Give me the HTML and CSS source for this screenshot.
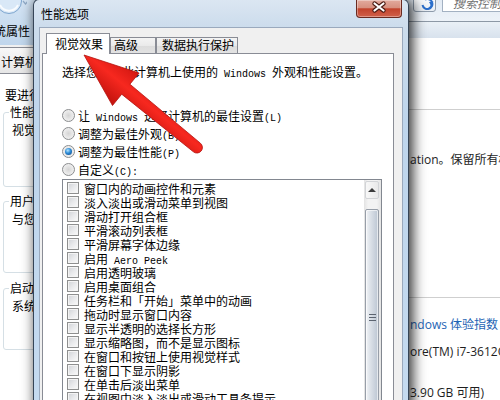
FILE: index.html
```html
<!DOCTYPE html>
<html lang="zh-CN">
<head>
    <meta charset="UTF-8">
    <title>性能选项</title>
    <link rel="stylesheet" href="styles.css">
</head>
<body>
    <!-- Ventana de fondo: Propiedades del sistema -->
    <div class="win-back">
        <div class="wb-bar">
            <svg class="wb-nav" width="30" height="28" viewBox="0 0 30 28">
                <circle cx="12" cy="12" r="12.5" fill="#d9e8f7" stroke="#7ea6cf" stroke-width="1"/>
                <path d="M3 16 A10 10 0 0 0 21 16" fill="none" stroke="#ffffff" stroke-width="2" opacity="0.8"/>
                <path d="M26 12 l2.5 3 l2.5 -3" fill="none" stroke="#8fa9c6" stroke-width="1.2"/>
            </svg>
        </div>
        <div class="wb-title">系统属性</div>
        <div class="wb-client">
            <div class="wb-tabs">
                <span class="wb-tab">计算机名</span>
                <span class="wb-tab">硬件</span>
            </div>
            <div class="wb-panel">
                <p class="wb-note">要进行大多数更改，您必须作为管理员登录。</p>
                <div class="wb-group g1">
                    <span class="wb-legend">性能</span>
                    <p>视觉效果，处理器计划，内存使用，以及虚拟内存</p>
                </div>
                <div class="wb-group g2">
                    <span class="wb-legend">用户配置文件</span>
                    <p>与您登录有关的桌面设置</p>
                </div>
                <div class="wb-group g3">
                    <span class="wb-legend">启动和故障恢复</span>
                    <p>系统启动、系统失败和调试信息</p>
                </div>
            </div>
        </div>
    </div>

    <!-- Ventana de fondo: Panel de control -->
    <div class="win-cp">
        <div class="cp-bar">
            <span class="cp-btn">
                <svg width="16" height="16" viewBox="0 0 16 16">
                    <path d="M3.5 9 A5 5 0 1 0 6 3.6" fill="none" stroke="#2c6fcb" stroke-width="2"/>
                    <path d="M12.5 7 A5 5 0 0 1 10 12.4" fill="none" stroke="#2c6fcb" stroke-width="2"/>
                    <path d="M12 9.5 l2.5 -4 l-4.5 0.5 z" fill="#2c6fcb"/>
                </svg>
            </span>
            <span class="cp-search">搜索控制面板</span>
        </div>
        <div class="cp-band"></div>
        <div class="cp-body">
            <div class="cp-rule r1"></div>
            <p class="cp-line copy">ation。保留所有权利。</p>
            <div class="cp-rule r2"></div>
            <p class="cp-line link">ndows 体验指数</p>
            <p class="cp-line cpu">ore(TM) i7-3612QM CPU @ 2.10GHz</p>
            <p class="cp-line mem">3.90 GB 可用)</p>
        </div>
    </div>

    <!-- Dialogo Opciones de rendimiento -->
    <div class="dialog">
        <div class="dlg-head">
            <span class="dlg-title">性能选项</span>
            <span class="dlg-close">
                <svg width="46" height="18" viewBox="0 0 46 18">
                    <path d="M18.5 4.5 L27.5 11.5 M27.5 4.5 L18.5 11.5" stroke="#4a1a12" stroke-width="4.4" stroke-linecap="round"/>
                    <path d="M18.5 4.5 L27.5 11.5 M27.5 4.5 L18.5 11.5" stroke="#ffffff" stroke-width="2.2" stroke-linecap="round"/>
                </svg>
            </span>
        </div>
        <div class="dlg-client">
            <div class="tabs">
                <span class="tab sel">视觉效果</span>
                <span class="tab t-adv">高级</span>
                <span class="tab t-dep">数据执行保护</span>
            </div>
            <div class="panel">
                <p class="intro">选择您想在此计算机上使用的<span class="en"> Windows </span>外观和性能设置。</p>
                <div class="radios">
                    <div class="opt"><span class="radio"></span><span>让<span class="en"> Windows </span>选择计算机的最佳设置<span class="en">(L)</span></span></div>
                    <div class="opt"><span class="radio"></span><span>调整为最佳外观<span class="en">(B)</span></span></div>
                    <div class="opt"><span class="radio on"></span><span>调整为最佳性能<span class="en">(P)</span></span></div>
                    <div class="opt"><span class="radio"></span><span>自定义<span class="en">(C):</span></span></div>
                </div>
                <div class="listbox">
                    <div class="items">
                        <div class="item"><span class="chk"></span><span>窗口内的动画控件和元素</span></div>
                        <div class="item"><span class="chk"></span><span>淡入淡出或滑动菜单到视图</span></div>
                        <div class="item"><span class="chk"></span><span>滑动打开组合框</span></div>
                        <div class="item"><span class="chk"></span><span>平滑滚动列表框</span></div>
                        <div class="item"><span class="chk"></span><span>平滑屏幕字体边缘</span></div>
                        <div class="item"><span class="chk"></span><span>启用<span class="en"> Aero Peek</span></span></div>
                        <div class="item"><span class="chk"></span><span>启用透明玻璃</span></div>
                        <div class="item"><span class="chk"></span><span>启用桌面组合</span></div>
                        <div class="item"><span class="chk"></span><span>任务栏和「开始」菜单中的动画</span></div>
                        <div class="item"><span class="chk"></span><span>拖动时显示窗口内容</span></div>
                        <div class="item"><span class="chk"></span><span>显示半透明的选择长方形</span></div>
                        <div class="item"><span class="chk"></span><span>显示缩略图，而不是显示图标</span></div>
                        <div class="item"><span class="chk"></span><span>在窗口和按钮上使用视觉样式</span></div>
                        <div class="item"><span class="chk"></span><span>在窗口下显示阴影</span></div>
                        <div class="item"><span class="chk"></span><span>在单击后淡出菜单</span></div>
                        <div class="item"><span class="chk"></span><span>在视图中淡入淡出或滑动工具条提示</span></div>
                        <div class="item"><span class="chk"></span><span>在鼠标指针下显示阴影</span></div>
                        <div class="item"><span class="chk"></span><span>在桌面上为图标标签使用阴影</span></div>
                    </div>
                    <div class="vscroll">
                        <span class="sb-up"></span>
                        <span class="sb-thumb"><span class="grip"></span></span>
                    </div>
                </div>
            </div>
        </div>
    </div>

    <!-- Flecha roja de anotacion -->
    <svg class="arrow" width="500" height="400" viewBox="0 0 500 400">
        <defs>
            <linearGradient id="redShade" gradientUnits="userSpaceOnUse" x1="138.5" y1="73.7" x2="113.1" y2="104.7">
                <stop offset="0" stop-color="#d41812"/>
                <stop offset="0.45" stop-color="#f7281f"/>
                <stop offset="1" stop-color="#c3130e"/>
            </linearGradient>
        </defs>
        <path d="M84 55 L139.1 73 L129.9 84.2 L200.4 143.2 A5.5 5.5 0 0 1 193.4 151.8 L121.7 94.2 L112.5 105.5 Z"
              fill="url(#redShade)" stroke="#b3100c" stroke-width="0.8" stroke-linejoin="round"/>
    </svg>
</body>
</html>
```

FILE: styles.css
```css
* {
    box-sizing: border-box;
}

body {
    margin: 0;
    width: 500px;
    height: 400px;
    overflow: hidden;
    position: relative;
    background: #ffffff;
    font-family: "Noto Sans CJK SC", sans-serif;
    font-size: 12px;
    color: #000;
}

p {
    margin: 0;
}

/* texto latino con ancho de SimSun */
.en {
    font-family: "Liberation Mono", monospace;
    font-size: 10px;
}

/* ---- ventana de fondo izquierda ---- */
.win-back {
    position: absolute;
    left: 0;
    top: 0;
    width: 220px;
    height: 400px;
    background: linear-gradient(to bottom, #d4e4f4, #c0d6ec 45px);
}

.wb-bar {
    height: 17px;
    position: relative;
    overflow: hidden;
}

.wb-nav {
    position: absolute;
    left: -3px;
    top: -11px;
}

.wb-title {
    height: 28px;
    line-height: 28px;
    margin-left: -18px;
    white-space: nowrap;
}

.wb-client {
    background: #f0f0f0;
    padding-top: 2px;
    height: 355px;
}

.wb-tabs {
    display: flex;
    margin-left: -5px;
}

.wb-tab {
    height: 26px;
    padding: 2px 6px 0 5px;
    line-height: 24px;
    border: 1px solid #898c95;
    border-bottom: none;
    background: linear-gradient(to bottom, #f7f7f7, #e6e6e6);
    white-space: nowrap;
}

.wb-panel {
    background: #ffffff;
    border-top: 1px solid #898c95;
    padding-top: 14px;
    height: 330px;
}

.wb-panel p {
    line-height: 14px;
    white-space: nowrap;
}

.wb-note {
    padding-left: 5px;
}

.wb-group {
    margin-left: 3px;
    border: 1px solid #d5dfe5;
    border-radius: 3px;
}

.wb-group p {
    margin-top: 4px;
    padding-left: 8px;
}

.wb-legend {
    display: block;
    width: max-content;
    margin: -8px 0 0 5px;
    padding: 0 1px;
    line-height: 14px;
    background: #ffffff;
}

.g1 { margin-top: 10px; height: 75px; }
.g2 { margin-top: 14px; height: 72px; }
.g3 { margin-top: 15px; height: 62px; }

/* ---- ventana de fondo derecha ---- */
.win-cp {
    position: absolute;
    left: 400px;
    top: 0;
    width: 100px;
    height: 400px;
    background: #ffffff;
}

.cp-bar {
    display: flex;
    align-items: flex-start;
    height: 22px;
    padding-left: 13px;
    background: linear-gradient(to bottom, #e3ebf4, #edf2f8);
    border-bottom: 1px solid #8d98a5;
}

.cp-btn {
    width: 27px;
    height: 17px;
    margin-top: -5px;
    border: 1px solid #8e9bab;
    border-radius: 3px;
    background: linear-gradient(to bottom, #ffffff, #e9eef4);
    padding-left: 5px;
}

.cp-search {
    margin: -5px 0 0 6px;
    width: 80px;
    height: 17px;
    border: 1px solid #a3b1c2;
    background: #ffffff;
    padding-left: 10px;
    line-height: 14px;
    color: #707070;
    font-style: italic;
    white-space: nowrap;
}

.cp-band {
    height: 16px;
    background: linear-gradient(to bottom, #eaf0f6, #d8e2ed);
}

.cp-body {
    padding-left: 10px;
}

.cp-rule {
    height: 1px;
    margin-left: -10px;
    background: #cfcfcf;
}

.r1 { margin-top: 71px; }
.r2 { margin-top: 129px; }

.cp-line {
    line-height: 16px;
    white-space: nowrap;
    font-family: "Open Sans", "Noto Sans CJK SC", sans-serif;
    color: #1e1e1e;
}

.copy { margin-top: 42px; }
.link { margin-top: 19px; color: #1e64b4; }
.cpu { margin-top: 11px; }
.mem { margin-top: 25px; }

/* ---- dialogo ---- */
.dialog {
    position: absolute;
    left: 33px;
    top: -1px;
    width: 376px;
    height: 440px;
    padding: 0 5px;
    border: 1px solid rgba(38, 52, 70, 0.9);
    border-radius: 6px 6px 0 0;
    background: linear-gradient(to bottom, #dbe6f2 0, #ccdcec 27px, #bed5ec 120px, #c6dbf0 100%);
    box-shadow: 3px 1px 13px 1px rgba(0, 0, 0, 0.8);
    display: flex;
    flex-direction: column;
}

.dlg-head {
    height: 27px;
    display: flex;
    justify-content: space-between;
    align-items: flex-start;
}

.dlg-title {
    padding-left: 2px;
    line-height: 27px;
}

.dlg-close {
    width: 46px;
    height: 18px;
    margin-right: 1px;
    border: 1px solid #6a2a20;
    border-top: none;
    border-radius: 0 0 4px 4px;
    background: linear-gradient(to bottom, #e2aa9d 0, #d7907f 45%, #c2432c 52%, #d0604a 100%);
    box-shadow: inset 0 0 0 1px rgba(255, 255, 255, 0.35);
}

.dlg-close svg {
    display: block;
    margin: -1px 0 0 -1px;
}

.dlg-client {
    flex: 1;
    background: #f0f0f0;
    border: 1px solid #9aa9bd;
    display: flex;
    flex-direction: column;
    overflow: hidden;
}

.tabs {
    display: flex;
    align-items: flex-end;
    margin: 5px 0 0 6px;
}

.tab {
    height: 16px;
    line-height: 14px;
    border: 1px solid #898c95;
    border-bottom: none;
    background: linear-gradient(to bottom, #f4f4f4 0, #eaeaea 50%, #dcdcdc 51%, #e2e2e2 100%);
    white-space: nowrap;
}

.tab.sel {
    position: relative;
    z-index: 1;
    width: 64px;
    height: 21px;
    margin-bottom: -1px;
    padding: 1px 0 0 8px;
    line-height: 18px;
    background: #ffffff;
}

.t-adv {
    width: 46px;
    padding-left: 3px;
}

.t-dep {
    width: 82px;
    padding-left: 5px;
}

.panel {
    flex: 1;
    margin: 0 8px 0 2px;
    padding: 11px 0 0 19px;
    background: #ffffff;
    border: 1px solid #898c95;
}

.intro {
    line-height: 14px;
    white-space: nowrap;
}

.radios {
    margin-top: 24px;
}

.opt {
    height: 18px;
    display: flex;
    align-items: center;
    white-space: nowrap;
}

.radio {
    width: 13px;
    height: 13px;
    margin-right: 3px;
    border-radius: 50%;
    border: 1px solid #8b8d8f;
    background: radial-gradient(circle at 50% 50%, #d4d4d4 0, #e6e6e6 45%, #f8f8f8 100%);
    display: flex;
    align-items: center;
    justify-content: center;
}

.radio.on::after {
    content: "";
    width: 7px;
    height: 7px;
    border-radius: 50%;
    background: radial-gradient(circle at 40% 35%, #b6e6ff 0, #2b8ad6 45%, #0b3f7c 100%);
}

.listbox {
    margin-top: 1px;
    width: 320px;
    height: 260px;
    border: 1px solid #828790;
    display: flex;
}

.items {
    flex: 1;
    padding: 1px 0 0 4px;
    overflow: hidden;
}

.item {
    height: 14px;
    display: flex;
    align-items: center;
    white-space: nowrap;
}

.chk {
    width: 12px;
    height: 12px;
    margin-right: 5px;
    border: 1px solid #8e8f8f;
    background: linear-gradient(135deg, #cfd2d6 0, #e8e9eb 50%, #fbfbfb 100%);
    box-shadow: inset 0 0 0 1px #f4f4f4;
}

.vscroll {
    width: 17px;
    display: flex;
    flex-direction: column;
    background: linear-gradient(to right, #e3e3e3 0, #f3f3f3 25%, #f3f3f3 75%, #e3e3e3 100%);
}

.sb-up {
    height: 20px;
    margin: 1px 2px 0 1px;
    border: 1px solid #d2d4d7;
    border-radius: 2px;
    background: linear-gradient(to right, #f8f8f8, #e9e9e9);
    display: flex;
    align-items: center;
    justify-content: center;
}

.sb-up::after {
    content: "";
    border-left: 4px solid transparent;
    border-right: 4px solid transparent;
    border-bottom: 4px solid #3c3c3c;
}

.sb-thumb {
    height: 240px;
    margin: 10px 2px 0 1px;
    border: 1px solid #979ea8;
    border-radius: 2px;
    background: linear-gradient(to right, #f2f4f7 0, #dfe4ea 30%, #cbd3dd 70%, #bcc6d2 100%);
    box-shadow: inset 0 0 0 1px rgba(255, 255, 255, 0.6);
    padding-top: 104px;
    display: flex;
    justify-content: center;
}

.grip {
    width: 7px;
    height: 7px;
    background: repeating-linear-gradient(to bottom, #5c6470 0, #5c6470 1px, transparent 1px, transparent 3px);
}

/* flecha de anotacion */
.arrow {
    position: absolute;
    left: 0;
    top: 0;
    pointer-events: none;
}
```
